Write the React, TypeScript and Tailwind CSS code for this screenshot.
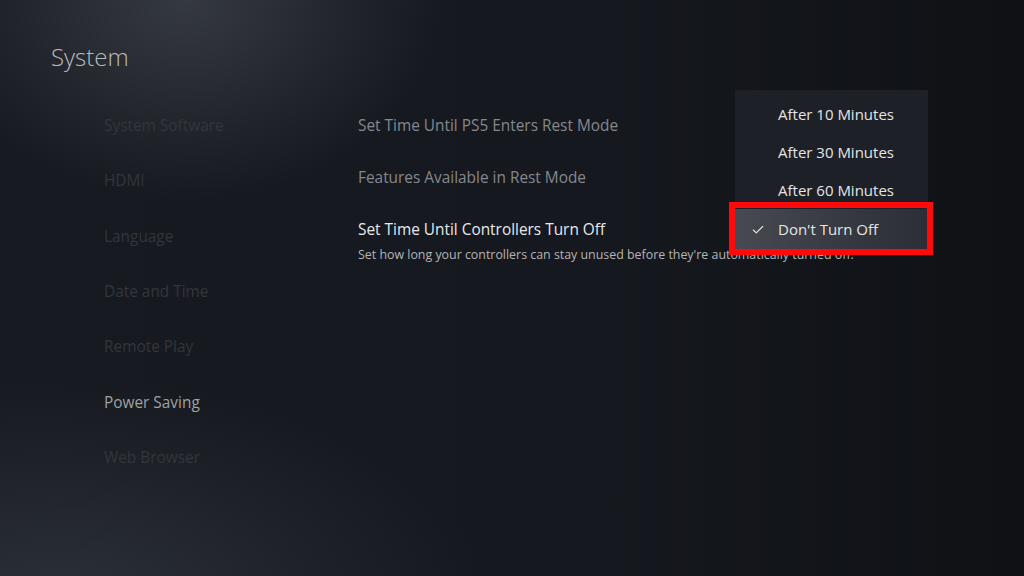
import { Check } from 'lucide-react';

const sideItems = [
  { label: 'System Software', active: false },
  { label: 'HDMI', active: false },
  { label: 'Language', active: false },
  { label: 'Date and Time', active: false },
  { label: 'Remote Play', active: false },
  { label: 'Power Saving', active: true },
  { label: 'Web Browser', active: false },
];

const options = ['After 10 Minutes', 'After 30 Minutes', 'After 60 Minutes'];

const App = () => {
  return (
    <div
      className="relative h-[576px] w-[1024px] overflow-hidden bg-[#13161b] bg-[radial-gradient(ellipse_260px_200px_at_185px_0px,rgba(90,95,105,0.45),transparent),radial-gradient(ellipse_420px_220px_at_60px_600px,rgba(60,66,74,0.55),transparent),linear-gradient(90deg,#171a20_0%,#15181e_60%,#0f1115_100%)]"
      style={{ fontFamily: '"Open Sans", "Noto Sans", sans-serif' }}
    >
      <div className="flex h-full">
        <div className="w-[358px] shrink-0 pl-[51px] pt-[40px]">
          <h1 className="text-[24px] leading-[34px] font-light text-[#b9bbbe]">
            System
          </h1>
          <ul className="mt-[24px] pl-[53px]">
            {sideItems.map((item) => (
              <li
                key={item.label}
                className={`flex h-[55.3px] items-center text-[15.4px] ${
                  item.active ? 'text-[#9fa1a5]' : 'text-[#32363d]'
                }`}
              >
                {item.label}
              </li>
            ))}
          </ul>
        </div>

        <div className="flex-1 pt-[113px]">
          <p className="h-[26px] text-[15.4px] leading-[26px] text-[#85888d]">
            Set Time Until PS5 Enters Rest Mode
          </p>
          <p className="mt-[26px] h-[26px] text-[15.4px] leading-[26px] text-[#85888d]">
            Features Available in Rest Mode
          </p>
          <p className="mt-[26px] h-[26px] text-[15.4px] leading-[26px] text-[#e8e8e9]">
            Set Time Until Controllers Turn Off
          </p>
          <p className="text-[12.4px] leading-[24px] text-[#b3b5b8]">
            Set how long your controllers can stay unused before they're
            automatically turned off.
          </p>
        </div>
      </div>

      <div className="absolute top-[90px] left-[735px] w-[193px] bg-[#1d2026] pt-[5px] pb-[2px]">
        {options.map((option) => (
          <div
            key={option}
            className="flex h-[38px] items-center pl-[43px] text-[15px] text-[#e4e5e6]"
          >
            {option}
          </div>
        ))}
        <div className="flex h-[41px] items-center bg-[linear-gradient(90deg,#474a51_0%,#383b42_50%,#2b2e34_100%)] pl-[16px] text-[15px] text-[#e4e5e6]">
          <Check className="mr-[13px] h-[14px] w-[14px] text-[#e4e5e6]" strokeWidth={2} />
          Don't Turn Off
        </div>
      </div>

      <div className="absolute top-[202px] left-[729px] h-[53px] w-[204px] border-[6px] border-[#ff0a0a]" />
    </div>
  );
};

export default App;
